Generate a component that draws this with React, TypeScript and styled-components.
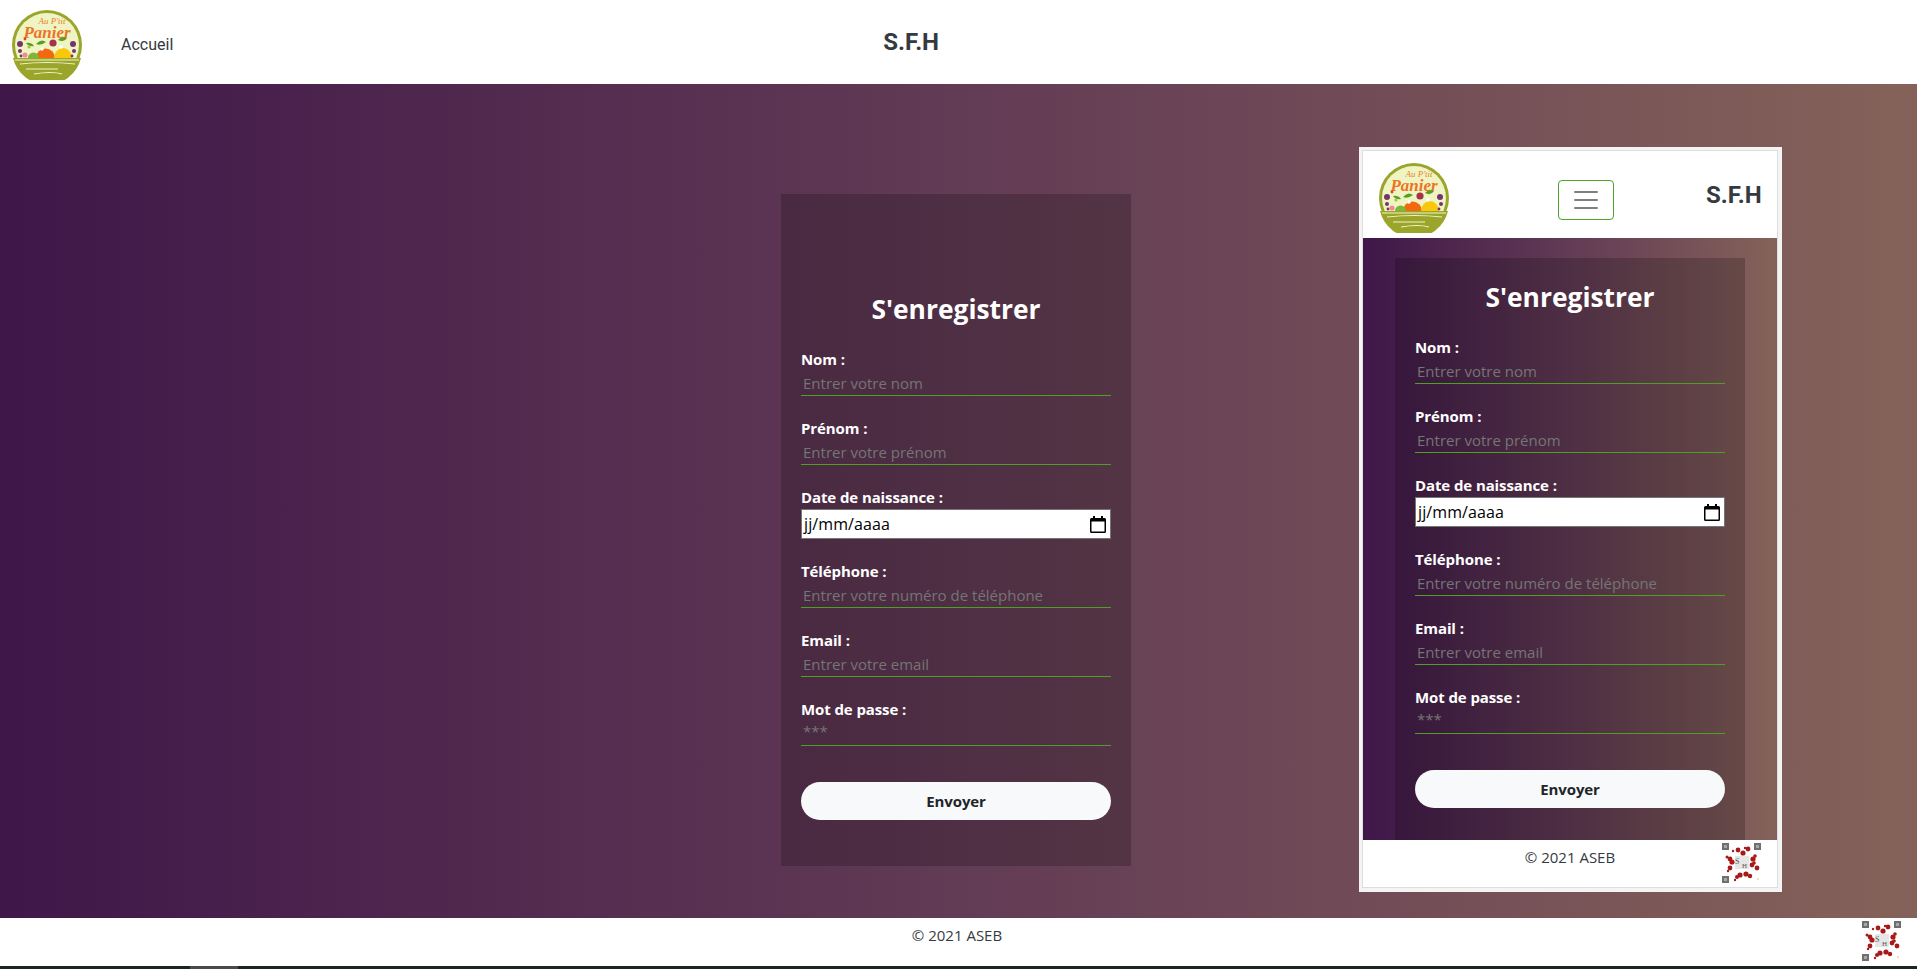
import React from 'react';
import styled, { createGlobalStyle } from 'styled-components';

const GlobalStyle = createGlobalStyle`
  html, body {
    margin: 0;
    padding: 0;
    background: #fff;
    overflow: hidden;
  }
  * {
    box-sizing: border-box;
  }
`;

const GRADIENT = 'linear-gradient(90deg, #3f1749 0%, #623b55 50%, #856259 100%)';
const FORM_FONT = '"Open Sans", "Noto Sans", sans-serif';
const HEAD_FONT = 'Roboto, "Liberation Sans", sans-serif';

const Page = styled.div`
  display: flex;
  flex-direction: column;
  width: 1917px;
  height: 969px;
`;

const TopBar = styled.header`
  display: flex;
  align-items: center;
  height: 84px;
  padding: 5px 0 0 12px;
  background: #fff;
`;

const NavLink = styled.a`
  margin-left: 39px;
  font-family: ${HEAD_FONT};
  font-size: 16px;
  color: #343a40;
`;

const BrandTitle = styled.h1`
  margin: 0 0 0 710px;
  font-family: ${HEAD_FONT};
  font-size: 24px;
  font-weight: 700;
  line-height: 1;
  color: #343a40;
  transform: translateY(-3px);
`;

const Main = styled.main`
  flex: 1;
  display: grid;
  grid-template-columns: 781px 350px 1fr;
  align-items: start;
  background: ${GRADIENT};
`;

const PhoneFrame = styled.div`
  grid-column: 3;
  width: 423px;
  height: 745px;
  margin: 63px 0 0 228px;
  padding: 3px 4px 4px 3px;
  background: #f4f4f4;
`;

const PhoneScreen = styled.div`
  display: flex;
  flex-direction: column;
  height: 100%;
  border: 1px solid #dedede;
  background: #fff;
  overflow: hidden;
`;

const PhoneBar = styled.div`
  display: flex;
  align-items: center;
  flex: 0 0 87px;
  padding: 7px 0 0 16px;
  background: #fff;
`;

const Burger = styled.button`
  display: flex;
  align-items: center;
  justify-content: center;
  width: 56px;
  height: 40px;
  margin: 3px 0 0 109px;
  padding: 0;
  border: 1px solid #4ca526;
  border-radius: 4px;
  background: transparent;
`;

const PhoneTitle = styled.h2`
  margin: 0 0 0 92px;
  font-family: ${HEAD_FONT};
  font-size: 24px;
  font-weight: 700;
  line-height: 1;
  color: #343a40;
  transform: translateY(-3px);
`;

const PhoneBody = styled.div`
  flex: 0 0 601px;
  padding: 20px 0 0 32px;
  background: ${GRADIENT};
`;

const Panel = styled.form<{ $top: number; $bottom: number }>`
  width: 350px;
  padding: ${(p) => p.$top}px 20px ${(p) => p.$bottom}px;
  background: rgba(0, 0, 0, 0.2);
  font-family: ${FORM_FONT};
`;

const DesktopPanel = styled(Panel)`
  grid-column: 2;
  margin-top: 110px;
`;

const FormTitle = styled.h2`
  margin: 0 0 19px;
  font-size: 26.4px;
  font-weight: 700;
  line-height: 38px;
  text-align: center;
  color: #fff;
`;

const Field = styled.div`
  margin-bottom: 20px;
`;

const Label = styled.label`
  display: block;
  font-size: 15px;
  font-weight: 700;
  line-height: 24px;
  letter-spacing: -0.1px;
  color: #fff;
`;

const TextInput = styled.input`
  display: block;
  width: 100%;
  height: 25px;
  padding: 0 2px;
  border: 0;
  border-bottom: 1px solid #4ca024;
  outline: none;
  background: transparent;
  font-family: ${FORM_FONT};
  font-size: 15px;
  color: #fff;

  &::placeholder {
    color: #757575;
    opacity: 1;
  }
`;

const PasswordInput = styled(TextInput)`
  padding-bottom: 4px;
`;

const DateBox = styled.div`
  display: flex;
  align-items: center;
  justify-content: space-between;
  height: 30px;
  padding: 0 4px 0 2px;
  border: 1px solid #767676;
  background: #fff;
  font-size: 16px;
  letter-spacing: 0.1px;
  color: #000;
`;

const SubmitButton = styled.button`
  display: block;
  width: 100%;
  height: 38px;
  margin-top: 36px;
  border: 0;
  border-radius: 19px;
  background: #f8f9fa;
  font-family: ${FORM_FONT};
  font-size: 15px;
  font-weight: 700;
  letter-spacing: -0.1px;
  color: #212529;
`;

const Footer = styled.footer<{ $height: number; $textRight: number }>`
  position: relative;
  display: flex;
  justify-content: center;
  flex: 0 0 ${(p) => p.$height}px;
  padding: 7px ${(p) => p.$textRight}px 0 0;
  background: #fff;
  font-family: ${FORM_FONT};
  font-size: 15px;
  line-height: 20px;
  color: #343a40;

  svg {
    position: absolute;
    top: 3px;
    right: 15px;
  }
`;

const ScreenEdge = styled.div`
  flex: 0 0 3px;
  padding-left: 190px;
  background: #1c2524;
`;

const EdgeThumb = styled.div`
  width: 48px;
  height: 3px;
  background: #4a4a4a;
`;

const PanierLogo: React.FC = () => (
  <svg width="70" height="70" viewBox="0 0 70 70">
    <circle cx="35" cy="35" r="35" fill="#9ca52b" />
    <circle cx="35" cy="35" r="32" fill="#eef5c3" />
    <path d="M1 48 H69 A35 35 0 0 1 1 48z" fill="#9ca52b" />
    <path d="M3 50 H67 M8 54 Q35 51 63 54 M14 59 H46 M22 64 Q40 61 50 64" stroke="#eef5c3" strokeWidth="1.2" fill="none" />
    <text x="40" y="14" textAnchor="middle" fontFamily="Liberation Serif, serif" fontStyle="italic" fontSize="9" fill="#ef7d2d">Au P'tit</text>
    <text x="35" y="28" textAnchor="middle" fontFamily="Liberation Serif, serif" fontStyle="italic" fontWeight="700" fontSize="17" fill="#ef7326">Panier</text>
    <path d="M24 34 q5 -6 10 -2 q-5 4 -10 2z M46 30 q4 -5 9 -2 q-3 5 -9 2z M14 33 q5 -1 8 3 q-5 1 -8 -3z" fill="#5f9d22" />
    <circle cx="41" cy="33" r="3.6" fill="#a8324a" />
    <path d="M24 48 a9.500 9.500 0 0 1 19 0z" fill="#f4690f" />
    <path d="M42 48 a9 10 0 0 1 18 0z" fill="#fbc70c" />
    <path d="M16 48 a5.500 5.500 0 0 1 11 0z" fill="#7fb539" />
    <circle cx="30" cy="39" r="1.7" fill="#fff" />
    <circle cx="49" cy="37" r="1.7" fill="#fff" />
    <circle cx="13" cy="45" r="2.6" fill="#ef8b98" />
    <circle cx="8" cy="34" r="3" fill="#76346f" />
    <circle cx="8" cy="41" r="2" fill="#76346f" />
    <circle cx="9" cy="46" r="1.4" fill="#76346f" />
    <circle cx="61" cy="34" r="3" fill="#76346f" />
    <circle cx="62" cy="41" r="2" fill="#76346f" />
    <circle cx="60" cy="46" r="1.4" fill="#76346f" />
    <circle cx="17" cy="37" r="1.6" fill="#a4c639" />
    <circle cx="13" cy="29" r="1.4" fill="#d8452c" />
  </svg>
);

const QR_BLOBS: [number, number, number][] = [
  [11, 8, 1.2], [16, 7, 2.4], [21, 10, 2.6], [26, 6, 2.4], [5, 14, 1.5], [8, 16, 2.4], [10, 19, 2.6],
  [8, 25, 2.4], [6, 28, 1.2], [31, 16, 2.6], [30, 22, 2.4], [33, 13, 1.8], [35, 25, 2.4], [32, 20, 1.8],
  [18, 32, 2.6], [24, 31, 2.6], [15, 34, 2], [28, 33, 2.2], [13, 37, 1.2], [23, 5, 1.2],
];

const QrCode: React.FC = () => (
  <svg width="40" height="40" viewBox="0 0 40 40">
    {[[0, 0], [32, 0], [0, 33]].map(([x, y]) => (
      <g key={`${x}-${y}`}>
        <rect x={x} y={y} width="7" height="7" fill="#6f6f6f" />
        <rect x={x + 2} y={y + 2} width="3" height="3" fill="#a8a8a8" />
      </g>
    ))}
    {QR_BLOBS.map(([cx, cy, r]) => (
      <circle key={`${cx}-${cy}`} cx={cx} cy={cy} r={r} fill="#a81a1a" />
    ))}
    <circle cx="36" cy="36" r="0.9" fill="#d9d98a" />
    <rect x="13" y="13" width="14" height="13" fill="#e6e6e6" />
    <text x="13" y="21" fontFamily="Liberation Serif, serif" fontSize="8" fill="#555">S</text>
    <text x="20" y="25" fontFamily="Liberation Serif, serif" fontSize="7" fill="#555">H</text>
  </svg>
);

const BurgerIcon: React.FC = () => (
  <svg width="30" height="30" viewBox="0 0 30 30">
    <path d="M4 7h22M4 15h22M4 23h22" stroke="rgba(0,0,0,0.5)" strokeWidth="2" strokeLinecap="round" />
  </svg>
);

const CalendarIcon: React.FC = () => (
  <svg width="16" height="17" viewBox="0 0 16 17">
    <path d="M3 0h2v2h6V0h2v2h1.5A1.5 1.5 0 0 1 16 3.5v12a1.5 1.5 0 0 1-1.5 1.5h-13A1.5 1.5 0 0 1 0 15.5v-12A1.5 1.5 0 0 1 1.500 2H3z" fill="#000" />
    <rect x="1.500" y="5.500" width="13" height="10" fill="#fff" />
  </svg>
);

const TEXT_FIELDS_BEFORE = [
  { label: 'Nom :', placeholder: 'Entrer votre nom' },
  { label: 'Prénom :', placeholder: 'Entrer votre prénom' },
];

const TEXT_FIELDS_AFTER = [
  { label: 'Téléphone :', placeholder: 'Entrer votre numéro de téléphone' },
  { label: 'Email :', placeholder: 'Entrer votre email' },
];

const FormFields: React.FC = () => (
  <>
    <FormTitle>S'enregistrer</FormTitle>
    {TEXT_FIELDS_BEFORE.map((f) => (
      <Field key={f.label}>
        <Label>{f.label}</Label>
        <TextInput placeholder={f.placeholder} />
      </Field>
    ))}
    <Field>
      <Label>Date de naissance :</Label>
      <DateBox>
        jj/mm/aaaa
        <CalendarIcon />
      </DateBox>
    </Field>
    {TEXT_FIELDS_AFTER.map((f) => (
      <Field key={f.label}>
        <Label>{f.label}</Label>
        <TextInput placeholder={f.placeholder} />
      </Field>
    ))}
    <Field>
      <Label>Mot de passe :</Label>
      <PasswordInput placeholder="***" />
    </Field>
    <SubmitButton type="button">Envoyer</SubmitButton>
  </>
);

const App: React.FC = () => (
  <Page>
    <GlobalStyle />
    <TopBar>
      <PanierLogo />
      <NavLink>Accueil</NavLink>
      <BrandTitle>S.F.H</BrandTitle>
    </TopBar>
    <Main>
      <DesktopPanel $top={96} $bottom={46}>
        <FormFields />
      </DesktopPanel>
      <PhoneFrame>
        <PhoneScreen>
          <PhoneBar>
            <PanierLogo />
            <Burger type="button">
              <BurgerIcon />
            </Burger>
            <PhoneTitle>S.F.H</PhoneTitle>
          </PhoneBar>
          <PhoneBody>
            <Panel $top={20} $bottom={32}>
              <FormFields />
            </Panel>
          </PhoneBody>
          <Footer $height={48} $textRight={0}>
            © 2021 ASEB
            <QrCode />
          </Footer>
        </PhoneScreen>
      </PhoneFrame>
    </Main>
    <Footer $height={48} $textRight={3}>
      © 2021 ASEB
      <QrCode />
    </Footer>
    <ScreenEdge>
      <EdgeThumb />
    </ScreenEdge>
  </Page>
);

export default App;
